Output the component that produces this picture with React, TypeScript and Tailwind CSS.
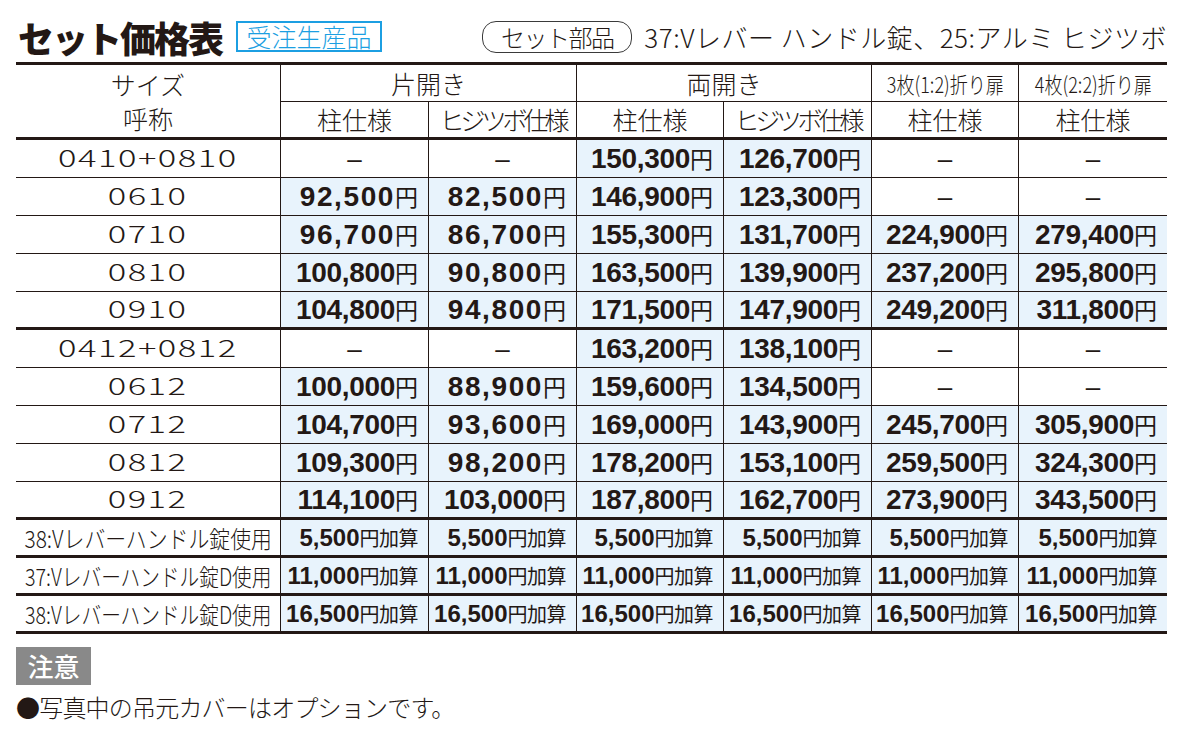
// App.tsx
const ink = "text-[#231815]";

type Row = [string, ...(string | null)[]];

const group1: Row[] = [
  ["0410+0810", null, null, "150,300", "126,700", null, null],
  ["0610", "92,500", "82,500", "146,900", "123,300", null, null],
  ["0710", "96,700", "86,700", "155,300", "131,700", "224,900", "279,400"],
  ["0810", "100,800", "90,800", "163,500", "139,900", "237,200", "295,800"],
  ["0910", "104,800", "94,800", "171,500", "147,900", "249,200", "311,800"],
];

const group2: Row[] = [
  ["0412+0812", null, null, "163,200", "138,100", null, null],
  ["0612", "100,000", "88,900", "159,600", "134,500", null, null],
  ["0712", "104,700", "93,600", "169,000", "143,900", "245,700", "305,900"],
  ["0812", "109,300", "98,200", "178,200", "153,100", "259,500", "324,300"],
  ["0912", "114,100", "103,000", "187,800", "162,700", "273,900", "343,500"],
];

const extras = [
  { label: "38:Vレバーハンドル錠使用", scale: "scale-x-[0.87]", price: "5,500" },
  { label: "37:Vレバーハンドル錠D使用", scale: "scale-x-[0.82]", price: "11,000" },
  { label: "38:Vレバーハンドル錠D使用", scale: "scale-x-[0.82]", price: "16,500" },
];

const cols = "grid grid-cols-[264px_148px_148px_147px_148px_147px_149px]";

function PriceCell({ v }: { v: string | null }) {
  if (!v) {
    return (
      <div className="border-l border-[#231815] bg-white flex items-center justify-center">
        <span className="font-['Liberation_Sans',Arial,sans-serif] text-[26px] leading-none">–</span>
      </div>
    );
  }
  const short = v.length <= 6;
  return (
    <div className="border-l border-[#231815] bg-[#e8f3fc] flex items-center justify-end pr-[10px]">
      <span className="font-['Liberation_Sans',Arial,sans-serif] font-bold text-[28px] leading-none whitespace-nowrap">
        <span className={short ? "tracking-[1.6px]" : "tracking-[-0.3px]"}>{v}</span>
        <span className="font-['Noto_Sans_CJK_JP',sans-serif] font-normal text-[23px]">円</span>
      </span>
    </div>
  );
}

function PriceGroup({ rows }: { rows: Row[] }) {
  return (
    <>
      {rows.map((r, i) => (
        <div
          key={r[0]}
          className={`${cols} ${
            i === rows.length - 1 ? "h-[38px] border-b-[3px]" : "h-[38px] border-b"
          } border-[#231815]`}
        >
          <div className="flex items-center justify-center bg-white">
            <span className="inline-block scale-x-[1.5] -translate-y-[1px] font-['Noto_Sans_CJK_JP',sans-serif] font-light text-[23px] tracking-[1px] leading-none">
              {r[0]}
            </span>
          </div>
          {r.slice(1).map((v, j) => (
            <PriceCell key={j} v={v} />
          ))}
        </div>
      ))}
    </>
  );
}

export default function App() {
  return (
    <div className={`w-[1192px] h-[756px] bg-white ${ink} font-['Noto_Sans_CJK_JP',sans-serif]`}>
      <div className="ml-[16px] w-[1151px]">
        {/* title row */}
        <div className="h-[62px] pt-[11px] flex items-center justify-between">
          <div className="flex items-center">
            <h1 className="text-[36px] font-black tracking-[-2px] leading-none pl-[2px]">セット価格表</h1>
            <span className="ml-[14px] h-[31px] w-[146px] border-2 border-[#1c9fe2] text-[#1c9fe2] text-[25px] font-light leading-none flex items-center justify-center">
              受注生産品
            </span>
          </div>
          <div className="flex items-center">
            <span className="h-[32px] w-[150px] border-[1.5px] border-[#3a3a3a] rounded-[14px] flex items-center justify-center text-[24px] font-light tracking-[-1.5px] leading-none">
              セット部品
            </span>
            <span className="ml-[12px] text-[26px] font-light leading-none whitespace-nowrap tracking-[0.5px]">
              37:Vレバー ハンドル錠、25:アルミ ヒジツボ
            </span>
          </div>
        </div>

        {/* header */}
        <div className={`${cols} grid-rows-[37px_35px] border-t-[3px] border-b-[3px] border-[#231815] text-[25px] font-light leading-none`}>
          <div className="row-span-2 flex flex-col items-center justify-center gap-[9px]">
            <span>サイズ</span>
            <span>呼称</span>
          </div>
          <div className="col-span-2 border-l border-b border-[#231815] flex items-center justify-center">片開き</div>
          <div className="col-span-2 border-l border-b border-[#231815] flex items-center justify-center">両開き</div>
          <div className="border-l border-b border-[#231815] flex items-center justify-center">
            <span className="inline-block scale-x-[0.82] text-[22px] whitespace-nowrap">3枚(1:2)折り扉</span>
          </div>
          <div className="border-l border-b border-[#231815] flex items-center justify-center">
            <span className="inline-block scale-x-[0.82] text-[22px] whitespace-nowrap">4枚(2:2)折り扉</span>
          </div>
          <div className="border-l border-[#231815] flex items-center justify-center">柱仕様</div>
          <div className="border-l border-[#231815] flex items-center justify-center tracking-[-4px]">ヒジツボ仕様</div>
          <div className="border-l border-[#231815] flex items-center justify-center">柱仕様</div>
          <div className="border-l border-[#231815] flex items-center justify-center tracking-[-4px]">ヒジツボ仕様</div>
          <div className="border-l border-[#231815] flex items-center justify-center">柱仕様</div>
          <div className="border-l border-[#231815] flex items-center justify-center">柱仕様</div>
        </div>

        <PriceGroup rows={group1} />
        <PriceGroup rows={group2} />

        {/* additional lock rows */}
        {extras.map((e) => (
          <div key={e.label} className={`${cols} h-[38px] border-b-[3px] border-[#231815]`}>
            <div className="flex items-center justify-center bg-white">
              <span className={`inline-block ${e.scale} text-[24px] font-light leading-none whitespace-nowrap`}>
                {e.label}
              </span>
            </div>
            {[0, 1, 2, 3, 4, 5].map((j) => (
              <div key={j} className="border-l border-[#231815] bg-[#e8f3fc] flex items-center justify-end pr-[10px]">
                <span className="font-['Liberation_Sans',Arial,sans-serif] font-bold text-[24px] leading-none whitespace-nowrap">
                  {e.price}
                  <span className="font-['Noto_Sans_CJK_JP',sans-serif] font-normal text-[20px] tracking-[-0.5px]">円加算</span>
                </span>
              </div>
            ))}
          </div>
        ))}

        {/* note */}
        <div className="mt-[13px] w-[75px] h-[38px] bg-[#898989] text-white text-[26px] font-medium leading-none flex items-center justify-center">
          注意
        </div>
        <p className="mt-[7px] text-[24px] font-light leading-[30px] tracking-[-0.8px] whitespace-nowrap">
          ●写真中の吊元カバーはオプションです。
        </p>
      </div>
    </div>
  );
}
